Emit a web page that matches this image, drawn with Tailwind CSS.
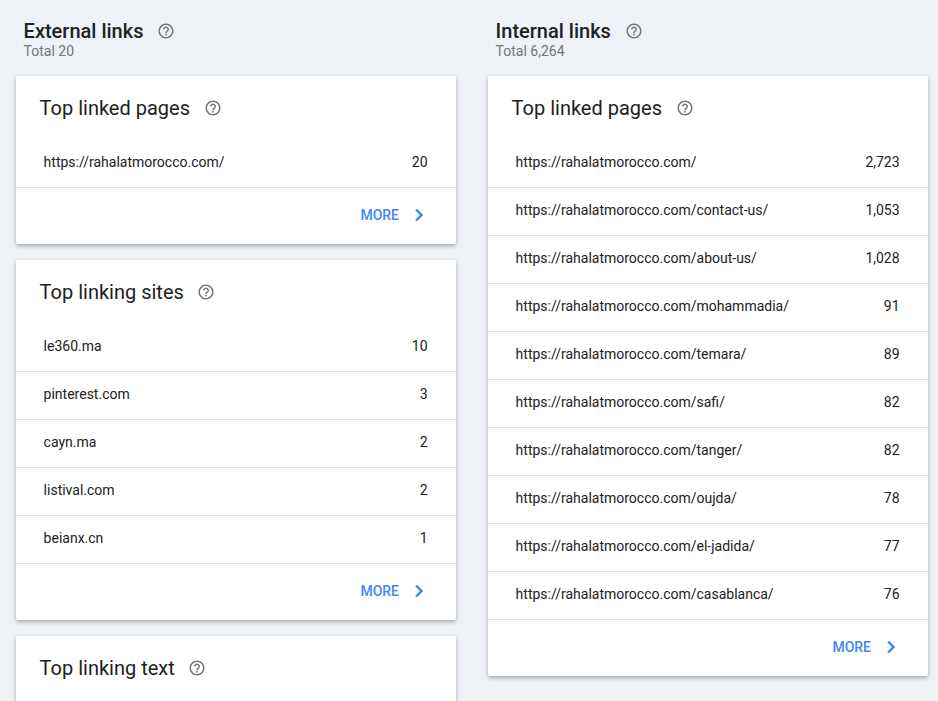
<!DOCTYPE html>
<html lang="en"><head><meta charset="utf-8"><title>Links</title>
<script src="https://cdn.jsdelivr.net/npm/@tailwindcss/browser@4"></script>
</head>
<body class="m-0 bg-[#eff3f8]">
<svg class="hidden"><defs>
<symbol id="help" viewBox="0 0 24 24"><path fill="currentColor" d="M11 18h2v-2h-2v2zm1-16C6.48 2 2 6.48 2 12s4.48 10 10 10 10-4.48 10-10S17.52 2 12 2zm0 18c-4.41 0-8-3.59-8-8s3.59-8 8-8 8 3.59 8 8-3.59 8-8 8zm0-14c-2.21 0-4 1.79-4 4h2c0-1.1.9-2 2-2s2 .9 2 2c0 2-3 1.75-3 5h2c0-2.25 3-2.5 3-5 0-2.21-1.79-4-4-4z"/></symbol>
<symbol id="chev" viewBox="0 0 24 24"><path fill="currentColor" stroke="currentColor" stroke-width="0.5" d="M10 6 8.59 7.41 13.17 12l-4.58 4.59L10 18l6-6z"/></symbol>
</defs></svg>
<div class="h-[701px] w-[938px] overflow-hidden flex gap-8 pl-4 font-['Roboto',sans-serif] text-[#212121]">

<div class="w-[440px] shrink-0">
  <div class="h-[76px] pl-[7.6px] pt-[19px]">
    <div class="flex items-center h-6"><h2 class="text-xl font-medium leading-6">External links</h2><svg class="w-[18px] h-[18px] ml-[14px] text-[#757575]"><use href="#help"/></svg></div>
    <div class="text-sm leading-4 text-[#757575]">Total 20</div>
  </div>
  <section class="bg-white rounded-[2px] shadow-[0_2px_4px_rgba(0,0,0,0.3)] mb-4">
    <div class="h-16 flex items-center pl-[23.6px] pb-[1px]"><h3 class="text-xl leading-6">Top linked pages</h3><svg class="w-[18px] h-[18px] ml-[14.4px] text-[#757575]"><use href="#help"/></svg></div>
    <div class="h-12 flex items-center justify-between pl-[27.6px] pr-[28.4px] pb-[3px] border-b border-[#e0e0e0] text-sm"><span>https://rahalatmorocco.com/</span><span>20</span></div>
    <div class="h-14 flex items-center justify-end pr-7 pb-[3px] text-[#4285f4] text-sm font-medium"><span>MORE</span><svg class="w-6 h-6 ml-2 -mr-[3px]"><use href="#chev"/></svg></div>
  </section>
  <section class="bg-white rounded-[2px] shadow-[0_2px_4px_rgba(0,0,0,0.3)] mb-4">
    <div class="h-16 flex items-center pl-[23.6px] pb-[1px]"><h3 class="text-xl leading-6">Top linking sites</h3><svg class="w-[18px] h-[18px] ml-[13.6px] text-[#757575]"><use href="#help"/></svg></div>
    <div class="h-12 flex items-center justify-between pl-[27.6px] pr-[28.4px] pb-[3px] border-b border-[#e0e0e0] text-sm"><span>le360.ma</span><span>10</span></div>
    <div class="h-12 flex items-center justify-between pl-[27.6px] pr-[28.4px] pb-[3px] border-b border-[#e0e0e0] text-sm"><span>pinterest.com</span><span>3</span></div>
    <div class="h-12 flex items-center justify-between pl-[27.6px] pr-[28.4px] pb-[3px] border-b border-[#e0e0e0] text-sm"><span>cayn.ma</span><span>2</span></div>
    <div class="h-12 flex items-center justify-between pl-[27.6px] pr-[28.4px] pb-[3px] border-b border-[#e0e0e0] text-sm"><span>listival.com</span><span>2</span></div>
    <div class="h-12 flex items-center justify-between pl-[27.6px] pr-[28.4px] pb-[3px] border-b border-[#e0e0e0] text-sm"><span>beianx.cn</span><span>1</span></div>
    <div class="h-14 flex items-center justify-end pr-7 pb-[3px] text-[#4285f4] text-sm font-medium"><span>MORE</span><svg class="w-6 h-6 ml-2 -mr-[3px]"><use href="#chev"/></svg></div>
  </section>
  <section class="bg-white rounded-[2px] shadow-[0_2px_4px_rgba(0,0,0,0.3)] mb-4">
    <div class="h-16 flex items-center pl-[23.6px] pb-[1px]"><h3 class="text-xl leading-6">Top linking text</h3><svg class="w-[18px] h-[18px] ml-[13.6px] text-[#757575]"><use href="#help"/></svg></div>
    <div class="h-12"></div>
  </section>
</div>

<div class="w-[440px] shrink-0">
  <div class="h-[76px] pl-[7.6px] pt-[19px]">
    <div class="flex items-center h-6"><h2 class="text-xl font-medium leading-6">Internal links</h2><svg class="w-[18px] h-[18px] ml-[14px] text-[#757575]"><use href="#help"/></svg></div>
    <div class="text-sm leading-4 text-[#757575]">Total 6,264</div>
  </div>
  <section class="bg-white rounded-[2px] shadow-[0_2px_4px_rgba(0,0,0,0.3)]">
    <div class="h-16 flex items-center pl-[23.6px] pb-[1px]"><h3 class="text-xl leading-6">Top linked pages</h3><svg class="w-[18px] h-[18px] ml-[14.4px] text-[#757575]"><use href="#help"/></svg></div>
    <div class="h-12 flex items-center justify-between pl-[27.6px] pr-[28.4px] pb-[3px] border-b border-[#e0e0e0] text-sm"><span>https://rahalatmorocco.com/</span><span>2,723</span></div>
    <div class="h-12 flex items-center justify-between pl-[27.6px] pr-[28.4px] pb-[3px] border-b border-[#e0e0e0] text-sm"><span>https://rahalatmorocco.com/contact-us/</span><span>1,053</span></div>
    <div class="h-12 flex items-center justify-between pl-[27.6px] pr-[28.4px] pb-[3px] border-b border-[#e0e0e0] text-sm"><span>https://rahalatmorocco.com/about-us/</span><span>1,028</span></div>
    <div class="h-12 flex items-center justify-between pl-[27.6px] pr-[28.4px] pb-[3px] border-b border-[#e0e0e0] text-sm"><span>https://rahalatmorocco.com/mohammadia/</span><span>91</span></div>
    <div class="h-12 flex items-center justify-between pl-[27.6px] pr-[28.4px] pb-[3px] border-b border-[#e0e0e0] text-sm"><span>https://rahalatmorocco.com/temara/</span><span>89</span></div>
    <div class="h-12 flex items-center justify-between pl-[27.6px] pr-[28.4px] pb-[3px] border-b border-[#e0e0e0] text-sm"><span>https://rahalatmorocco.com/safi/</span><span>82</span></div>
    <div class="h-12 flex items-center justify-between pl-[27.6px] pr-[28.4px] pb-[3px] border-b border-[#e0e0e0] text-sm"><span>https://rahalatmorocco.com/tanger/</span><span>82</span></div>
    <div class="h-12 flex items-center justify-between pl-[27.6px] pr-[28.4px] pb-[3px] border-b border-[#e0e0e0] text-sm"><span>https://rahalatmorocco.com/oujda/</span><span>78</span></div>
    <div class="h-12 flex items-center justify-between pl-[27.6px] pr-[28.4px] pb-[3px] border-b border-[#e0e0e0] text-sm"><span>https://rahalatmorocco.com/el-jadida/</span><span>77</span></div>
    <div class="h-12 flex items-center justify-between pl-[27.6px] pr-[28.4px] pb-[3px] border-b border-[#e0e0e0] text-sm"><span>https://rahalatmorocco.com/casablanca/</span><span>76</span></div>
    <div class="h-14 flex items-center justify-end pr-7 pb-[3px] text-[#4285f4] text-sm font-medium"><span>MORE</span><svg class="w-6 h-6 ml-2 -mr-[3px]"><use href="#chev"/></svg></div>
  </section>
</div>

</div>
</body></html>
